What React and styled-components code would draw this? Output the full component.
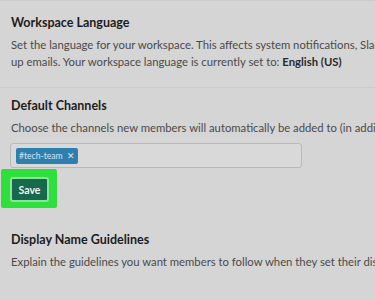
import styled, { createGlobalStyle } from "styled-components"

const Global = createGlobalStyle`
    html, body {
        margin: 0;
        padding: 0;
        background: #d5d5d5;
        overflow: hidden;
    }
    body {
        font-family: Lato, "Noto Sans", sans-serif;
        color: #1f1e1f;
    }
`

const Page = styled.div`
    width: 375px;
    height: 300px;
    overflow: hidden;
    background: #d5d5d5;
`

const Section = styled.section`
    padding: ${(props) => props.$pad || "13px 0 17px 11px"};
    border-top: ${(props) => (props.$line ? "1px solid #cbcbcb" : "none")};
`

const Title = styled.h3`
    margin: 0 0 4px;
    font-size: 12.5px;
    font-weight: 700;
    line-height: 18px;
    color: #1d1c1d;
    white-space: nowrap;
`

const Desc = styled.p`
    margin: 0;
    font-size: 11.3px;
    line-height: 17px;
    color: #4a4a4a;
    white-space: nowrap;

    b {
        color: #2a2a2a;
        font-weight: 700;
    }
`

const Field = styled.div`
    display: flex;
    align-items: center;
    margin: 7px 0 0 -1px;
    width: 280px;
    height: 23px;
    padding: 0 5px;
    border: 1px solid #b8b8b8;
    border-radius: 3px;
    background: #d9d9d9;
`

const Tag = styled.span`
    display: inline-flex;
    align-items: center;
    gap: 4px;
    height: 16px;
    padding: 0 3px 0 3px;
    background: #2f7fae;
    border-radius: 2px;
    color: #cfe6f4;
    font-size: 8.6px;
    line-height: 16px;
`

const Close = styled.span`
    font-size: 9px;
    color: #d8ecf8;
`

const Highlight = styled.div`
    display: inline-flex;
    margin: 1px 0 0 -10px;
    padding: 8px 8px 6px 9px;
    background: #2ee03c;
    border-radius: 2px;
`

const SaveButton = styled.button`
    width: 39px;
    height: 25px;
    border: 2px solid #8ee29a;
    border-radius: 3px;
    background: #15694f;
    color: #f2f2f2;
    font-family: Lato, "Noto Sans", sans-serif;
    font-size: 10.5px;
    font-weight: 700;
    padding: 0;
`

const App = () => {
    return (
        <Page>
            <Global />
            <Section $line $pad="13px 0 17px 11px">
                <Title>Workspace Language</Title>
                <Desc>
                    Set the language for your workspace. This affects system notifications, Slack sign-
                    <br />
                    up emails. Your workspace language is currently set to: <b>English (US)</b>
                </Desc>
            </Section>
            <Section $line $pad="9px 0 23px 11px">
                <Title>Default Channels</Title>
                <Desc>Choose the channels new members will automatically be added to (in addition to #general).</Desc>
                <Field>
                    <Tag>
                        #tech-team <Close>✕</Close>
                    </Tag>
                </Field>
                <Highlight>
                    <SaveButton>Save</SaveButton>
                </Highlight>
            </Section>
            <Section $pad="0 0 0 11px">
                <Title>Display Name Guidelines</Title>
                <Desc>Explain the guidelines you want members to follow when they set their display names.</Desc>
            </Section>
        </Page>
    )
}

export default App
